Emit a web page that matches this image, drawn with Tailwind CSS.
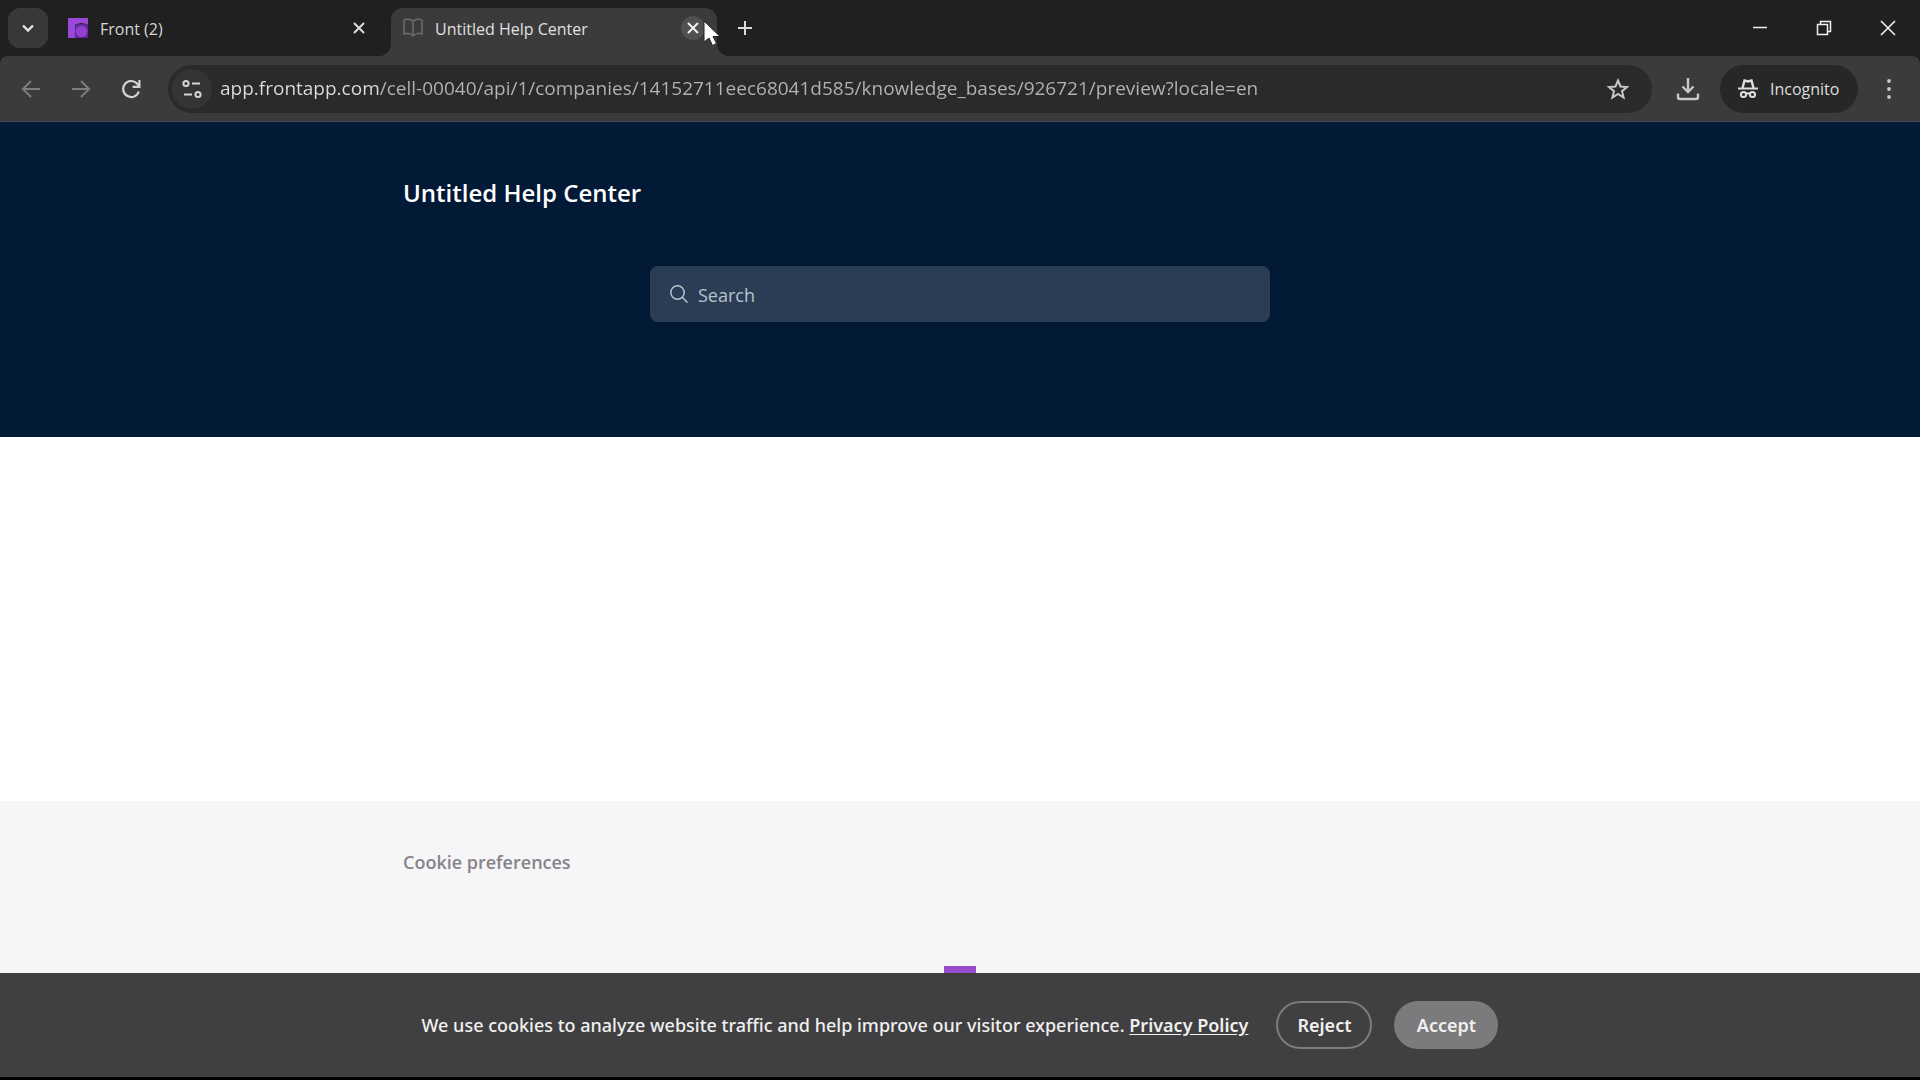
<!DOCTYPE html>
<html lang="en">
<head>
<meta charset="utf-8">
<title>Untitled Help Center</title>
<script src="https://cdn.jsdelivr.net/npm/@tailwindcss/browser@4"></script>
</head>
<body class="flex min-h-screen flex-col bg-black font-['Segoe_UI','Open_Sans',sans-serif] text-lg">

<!-- Browser tab strip -->
<div class="flex h-14 items-start bg-[#202020] pl-2 text-[#d6d6d6]">
  <button aria-label="Search tabs" class="mt-2 flex size-10 items-center justify-center rounded-xl bg-[#383838]">
    <svg class="size-5" viewBox="0 0 20 20" fill="none" stroke="#e3e3e3" stroke-width="2.4"><path d="M5 7.5l5 5 5-5"/></svg>
  </button>
  <div class="mt-2 flex h-10 w-[343px] items-center pr-6 pl-5 text-base">
    <svg class="size-5 shrink-0" viewBox="0 0 20 20"><path d="M0 0h20v7.500A9 9 0 0 0 7 8v12H0z" fill="#9a48d8"/><path d="M7 6h13v14H7z" fill="#5f2a96"/><circle cx="13.500" cy="13.500" r="5.800" fill="#9340d2"/></svg>
    <span class="ml-3 flex-1 pt-0.5">Front (2)</span>
    <button aria-label="Close tab"><svg class="size-4" viewBox="0 0 16 16" stroke="#dcdcdc" stroke-width="2"><path d="M3 3l10 10M13 3L3 13"/></svg></button>
  </div>
  <div class="relative mt-2 flex h-12 w-[326px] items-start rounded-t-xl bg-[#3b3b3b] text-base">
    <svg class="absolute bottom-0 -left-3 size-3" viewBox="0 0 12 12"><path d="M12 0v12H0A12 12 0 0 0 12 0" fill="#3b3b3b"/></svg>
    <svg class="absolute -right-3 bottom-0 size-3" viewBox="0 0 12 12"><path d="M0 0v12h12A12 12 0 0 1 0 0" fill="#3b3b3b"/></svg>
    <div class="flex h-10 w-full items-center pr-3 pl-3">
      <svg class="size-5 shrink-0" viewBox="0 0 20 20" fill="none" stroke="#6b6b6b" stroke-width="1.600" stroke-linejoin="round"><path d="M10 3.500C8 1 3 .6 1 2.200v14c2-1.400 7-1 9 1.600 2-2.600 7-3 9-1.600v-14C17 .6 12 1 10 3.500zM10 3.500v14"/></svg>
      <span class="ml-3 flex-1 pt-0.5 text-[#e0e0e0]">Untitled Help Center</span>
      <button aria-label="Close tab" class="flex size-6 items-center justify-center rounded-full bg-[#505050]"><svg class="size-4" viewBox="0 0 16 16" stroke="#f0f0f0" stroke-width="2"><path d="M3 3l10 10M13 3L3 13"/></svg></button>
    </div>
    <!-- Mouse pointer -->
    <svg class="absolute top-3 left-[311px] z-10 h-7 w-5" viewBox="0 0 20 28"><path d="M2 1v21l5-4 3.500 7.500 4-2-3.500-7h7z" fill="#fff" stroke="#222" stroke-width="1"/></svg>
  </div>
  <button aria-label="New tab" class="mt-2 ml-2 flex size-10 items-center justify-center"><svg class="size-4" viewBox="0 0 16 16" stroke="#dcdcdc" stroke-width="2"><path d="M8 1v14M1 8h14"/></svg></button>
  <div class="ml-auto flex h-14">
    <button aria-label="Minimize" class="flex w-16 items-center justify-center"><svg class="size-4" viewBox="0 0 16 16" stroke="#f0f0f0" stroke-width="1.500"><path d="M1 7.500h14"/></svg></button>
    <button aria-label="Restore" class="flex w-16 items-center justify-center"><svg class="size-4" viewBox="0 0 16 16" fill="none" stroke="#f0f0f0" stroke-width="1.500"><path d="M1.500 4.500h10v10h-10zM4.500 4V1.500h10v10H12"/></svg></button>
    <button aria-label="Close window" class="flex w-16 items-center justify-center"><svg class="size-4" viewBox="0 0 16 16" stroke="#f0f0f0" stroke-width="1.600"><path d="M1 1l14 14M15 1L1 15"/></svg></button>
  </div>
</div>

<!-- Browser toolbar -->
<div class="bg-[#202020]">
  <div class="flex h-[66px] items-center rounded-t-lg border-b border-[#474b50] bg-[#3b3b3b] pr-4 pl-1.5 text-[#dedede]">
    <button aria-label="Back" class="flex w-[50px] justify-center"><svg class="size-5" viewBox="0 0 20 20" fill="none" stroke="#7d7d7d" stroke-width="2"><path d="M19 10H2.500M10 2l-8 8 8 8"/></svg></button>
    <button aria-label="Forward" class="flex w-[50px] justify-center"><svg class="size-5" viewBox="0 0 20 20" fill="none" stroke="#7d7d7d" stroke-width="2"><path d="M1 10h16.500M10 2l8 8-8 8"/></svg></button>
    <button aria-label="Reload" class="flex w-[50px] justify-center"><svg class="size-5" viewBox="0 0 20 20" fill="none" stroke="#d4d4d4" stroke-width="2.200"><path d="M17.800 12.500A8 8 0 1 1 16 4.500l2 2.200M18.400 1v6.800h-6.800"/></svg></button>
    <div class="ml-3 flex h-12 flex-1 items-center rounded-full bg-[#292a2c] pr-[22px] pl-1">
      <button aria-label="View site information" class="flex size-10 shrink-0 items-center justify-center rounded-full bg-[#343434]"><svg class="size-5" viewBox="0 0 20 20" fill="none" stroke="#d4d4d4" stroke-width="2"><circle cx="4" cy="4.500" r="2.600"/><path d="M10 4.500h8M2 15.500h8"/><circle cx="16" cy="15.500" r="2.600"/></svg></button>
      <input aria-label="Address" type="text" class="ml-2 min-w-0 flex-1 bg-linear-to-r from-[#dedede] from-[159px] to-[#b4b4b4] to-[159px] bg-clip-text text-[19px] text-transparent outline-none" value="app.frontapp.com/cell-00040/api/1/companies/14152711eec68041d585/knowledge_bases/926721/preview?locale=en">
      <button aria-label="Bookmark this tab"><svg class="size-6" viewBox="0 0 24 24" fill="none" stroke="#c8c8c8" stroke-width="2"><path d="M12 3.500l2.500 6 6.500.5-5 4.200 1.600 6.300L12 17l-5.600 3.500L8 14.200 3 10l6.500-.5z"/></svg></button>
    </div>
    <button aria-label="Downloads" class="ml-6 flex size-6 items-center justify-center"><svg class="size-6" viewBox="0 0 24 24" fill="none" stroke="#c8c8c8" stroke-width="2.400"><path d="M12 1v14M6.500 9.500L12 15l5.500-5.500M2 16.500V20a2 2 0 0 0 2 2h16a2 2 0 0 0 2-2v-3.500"/></svg></button>
    <button class="ml-5 flex h-12 w-[138px] items-center rounded-full bg-[#272727] pl-[18px] text-base">
      <svg class="size-5 shrink-0" viewBox="0 0 20 20" fill="none" stroke="#dedede" stroke-width="2"><path d="M0 9.500h20"/><path d="M4.500 9L6.500 1.500l3.500 1 3.500-1L15.500 9" stroke-width="2.400"/><circle cx="5.500" cy="15.500" r="2.600"/><circle cx="14.500" cy="15.500" r="2.600"/><path d="M8 15q2-1.500 4 0"/></svg>
      <span class="ml-3">Incognito</span>
    </button>
    <button aria-label="Menu" class="flex w-[46px] justify-center pl-4"><svg class="size-5" viewBox="0 0 20 20" fill="#c8c8c8"><circle cx="10" cy="2" r="1.900"/><circle cx="10" cy="10" r="1.900"/><circle cx="10" cy="18" r="1.900"/></svg></button>
  </div>
</div>

<!-- Help center header -->
<header class="h-[315px] bg-[#021a35]">
  <div class="mx-auto max-w-[1114px] pt-[55px]">
    <h1 class="text-2xl font-semibold text-white">Untitled Help Center</h1>
    <label class="mx-auto mt-[57px] flex h-14 max-w-[620px] items-center rounded-lg bg-[#2a3d55] px-5">
      <svg class="size-[18px] shrink-0" viewBox="0 0 18 18" fill="none" stroke="#b9c2cc" stroke-width="1.500"><circle cx="7.500" cy="7.500" r="6.700"/><path d="M12.300 12.300l5.200 5.200"/></svg>
      <input type="text" aria-label="Search" placeholder="Search" class="ml-2.5 min-w-0 flex-1 pt-0.5 font-medium outline-none placeholder:text-[#b9c2cc]">
    </label>
  </div>
</header>

<main class="h-[364px] bg-white"></main>

<footer class="flex flex-1 flex-col bg-[#f6f5f7]">
  <div class="mx-auto w-full max-w-[1114px] pt-[47px]">
    <button class="text-lg font-semibold text-[#868489]">Cookie preferences</button>
  </div>
  <div class="mx-auto mt-auto h-[7px] w-8 bg-[#964dcd]"></div>
</footer>

<!-- Cookie consent -->
<section aria-label="Cookie consent" class="mb-[3px] flex h-[104px] items-center justify-center bg-[#403f41] font-['Segoe_UI','Noto_Sans',sans-serif] text-lg text-[#f0f0f0]">
  <p class="font-medium">We use cookies to analyze website traffic and help improve our visitor experience. <a href="#" class="font-semibold underline underline-offset-2">Privacy Policy</a></p>
  <button class="ml-7 h-12 w-24 rounded-full border-2 border-[#7c7b7d] font-semibold">Reject</button>
  <button class="ml-[22px] h-12 w-[104px] rounded-full bg-[#7b7a7c] font-semibold">Accept</button>
</section>

</body>
</html>
